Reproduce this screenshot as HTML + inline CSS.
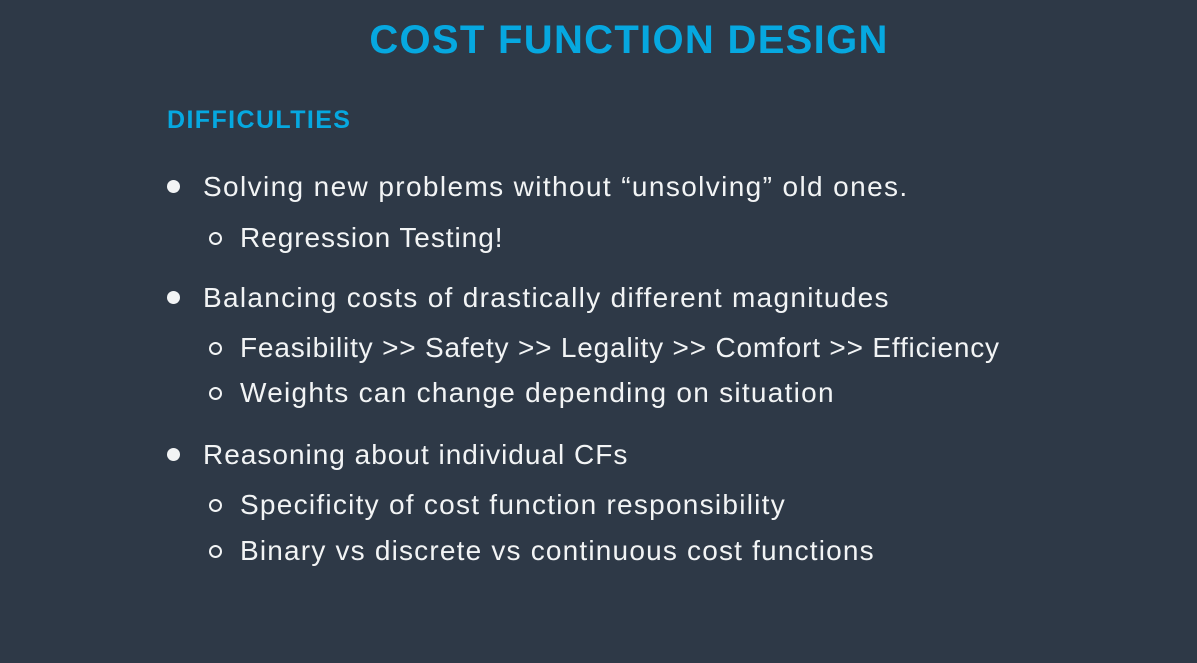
<!DOCTYPE html>
<html><head><style>
html,body{margin:0;padding:0}
body{width:1197px;height:663px;background:#2e3947;position:relative;overflow:hidden;font-family:"Liberation Sans",sans-serif;color:#f2f4f5}
.t{position:absolute;left:0;width:1258px;text-align:center;top:18px;font-size:40px;font-weight:bold;color:#06a8e0;letter-spacing:1.3px}
.h{position:absolute;left:167px;top:106px;font-size:25px;font-weight:bold;color:#06a8e0;letter-spacing:1.4px}
.l{position:absolute;font-size:28px;white-space:nowrap;line-height:34px}
.b1{left:203px}.b2{left:240px}
.d{position:absolute;width:13px;height:13px;border-radius:50%;background:#f2f4f5}
.c{position:absolute;width:9px;height:9px;border-radius:50%;border:2px solid #f2f4f5}
</style></head><body>
<div class="t">COST FUNCTION DESIGN</div>
<div class="h">DIFFICULTIES</div>
<div class="d" style="left:167px;top:180px"></div>
<div class="l b1" style="top:170px;letter-spacing:1.38px">Solving new problems without “unsolving” old ones.</div>
<div class="c" style="left:209px;top:232px"></div>
<div class="l b2" style="top:221px;letter-spacing:0.95px">Regression Testing!</div>
<div class="d" style="left:167px;top:291px"></div>
<div class="l b1" style="top:281px;letter-spacing:1.3px">Balancing costs of drastically different magnitudes</div>
<div class="c" style="left:209px;top:342px"></div>
<div class="l b2" style="top:331px;letter-spacing:0.82px">Feasibility &gt;&gt; Safety &gt;&gt; Legality &gt;&gt; Comfort &gt;&gt; Efficiency</div>
<div class="c" style="left:209px;top:387px"></div>
<div class="l b2" style="top:376px;letter-spacing:1.27px">Weights can change depending on situation</div>
<div class="d" style="left:167px;top:448px"></div>
<div class="l b1" style="top:438px;letter-spacing:1.0px">Reasoning about individual CFs</div>
<div class="c" style="left:209px;top:499px"></div>
<div class="l b2" style="top:488px;letter-spacing:1.26px">Specificity of cost function responsibility</div>
<div class="c" style="left:209px;top:545px"></div>
<div class="l b2" style="top:534px;letter-spacing:1.19px">Binary vs discrete vs continuous cost functions</div>
</body></html>
